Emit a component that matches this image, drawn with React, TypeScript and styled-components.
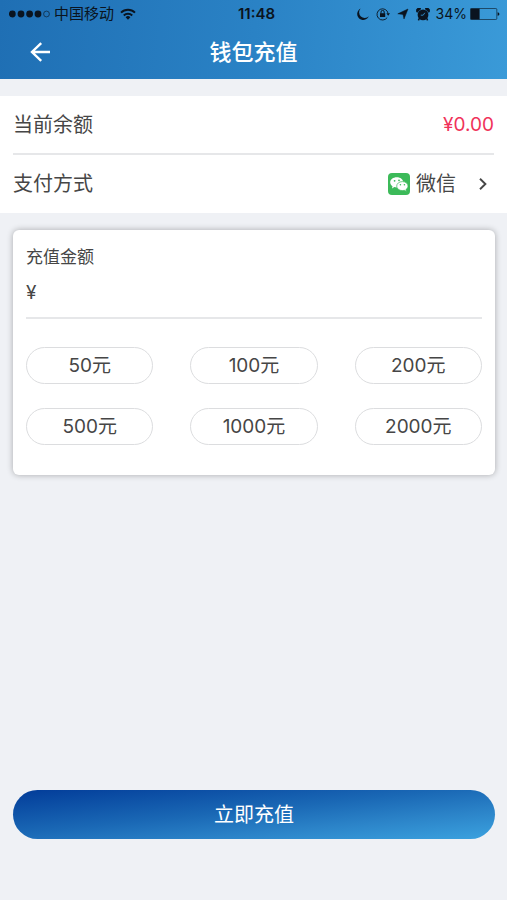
import React, { useState } from 'react';
import styled, { createGlobalStyle } from 'styled-components';

const GlobalStyle = createGlobalStyle`
  *, *::before, *::after { box-sizing: border-box; }
  body {
    margin: 0;
    background: #eff1f5;
    color: #464646;
    font-family: Inter, "Noto Sans CJK SC", sans-serif;
    font-size: 20px;
    line-height: 24px;
  }
  button, input { font: inherit; color: inherit; }
`;

const Page = styled.div`
  min-height: 100vh;
  display: flex;
  flex-direction: column;
`;

const TopBar = styled.header`
  background: linear-gradient(95deg, #1f6fb4 0%, #2a82c5 50%, #3a9ad8 100%);
`;

const StatusBar = styled.div`
  height: 28px;
  padding: 0 7px 0 9px;
  display: grid;
  grid-template-columns: 1fr auto 1fr;
  align-items: center;
  color: #0a1420;
  font-size: 15px;
  line-height: 20px;
`;

const StatusGroup = styled.div<{ $end?: boolean }>`
  display: flex;
  align-items: center;
  justify-content: ${(p) => (p.$end ? 'flex-end' : 'flex-start')};
  white-space: nowrap;
  svg { display: block; flex: none; }
`;

const Carrier = styled.span`
  margin: 0 6px 0 3px;
`;

const Clock = styled.time`
  font-weight: 600;
  padding-left: 4px;
`;

const StatusIcons = styled.div`
  display: flex;
  align-items: center;
  gap: 7px;
  margin-right: 6px;
`;

const Percent = styled.span`
  font-size: 14px;
  margin-right: 3px;
`;

const NavBar = styled.div`
  height: 51px;
  padding: 0 28px 3px;
  display: grid;
  grid-template-columns: 24px 1fr 24px;
  align-items: center;
`;

const BackButton = styled.button`
  padding: 0;
  border: 0;
  background: none;
  color: #fff;
  cursor: pointer;
  svg { display: block; }
`;

const Title = styled.h1`
  margin: 0;
  color: #fff;
  font-size: 22px;
  line-height: 28px;
  font-weight: 500;
  text-align: center;
`;

const Summary = styled.section`
  margin-top: 17px;
  padding: 0 13px;
  background: #fff;
`;

const SummaryRow = styled.div`
  height: 59px;
  display: flex;
  align-items: center;
  justify-content: space-between;
  border-bottom: 2px solid #e6e7e9;
`;

const MethodRow = styled.button`
  width: 100%;
  height: 58px;
  padding: 0;
  border: 0;
  background: none;
  display: flex;
  align-items: center;
  justify-content: space-between;
  cursor: pointer;
`;

const Balance = styled.span`
  color: #f0325a;
  font-size: 19px;
`;

const Method = styled.span`
  display: flex;
  align-items: center;
  padding-right: 7px;
  svg { display: block; }
`;

const MethodName = styled.span`
  margin: 0 23px 0 6px;
`;

const Card = styled.section`
  margin: 17px 12px 0 13px;
  padding: 15px 13px 30px;
  border-radius: 6px;
  background: #fff;
  box-shadow: 0 0 6px rgba(0, 0, 0, 0.3);
`;

const AmountLabel = styled.label`
  display: block;
  font-size: 17px;
`;

const AmountField = styled.div`
  height: 50px;
  display: flex;
  align-items: center;
  gap: 8px;
  border-bottom: 2px solid #e6e7e9;
  font-size: 19px;
`;

const AmountInput = styled.input`
  flex: 1;
  min-width: 0;
  padding: 0;
  border: 0;
  outline: 0;
  background: none;
`;

const Presets = styled.div`
  margin-top: 28px;
  display: grid;
  grid-template-columns: repeat(3, 1fr);
  gap: 24px 37px;
`;

const Preset = styled.button`
  height: 37px;
  padding: 0;
  border: 1px solid #dcdddf;
  border-radius: 19px;
  background: #fff;
  font-size: 19px;
  cursor: pointer;
`;

const Footer = styled.footer`
  margin-top: auto;
  padding: 24px 12px 61px 13px;
`;

const Submit = styled.button`
  width: 100%;
  height: 49px;
  padding: 0;
  border: 0;
  border-radius: 25px;
  color: #fff;
  background: linear-gradient(to bottom right, #023c99 0%, #1a68b5 45%, #2b83c8 70%, #3ba2df 100%);
  cursor: pointer;
`;

const presets = [50, 100, 200, 500, 1000, 2000];

const SignalIcon = () => (
  <svg width="42" height="10" viewBox="0 0 42 10" fill="currentColor">
    <circle cx="3.3" cy="5" r="3.4" />
    <circle cx="12" cy="5" r="3.4" />
    <circle cx="20.6" cy="5" r="3.4" />
    <circle cx="29" cy="5" r="3.4" />
    <circle cx="37.5" cy="5" r="2.9" fill="none" stroke="currentColor" strokeWidth="0.6" />
  </svg>
);

const WifiIcon = () => (
  <svg width="16" height="12" viewBox="0 0 16 12" fill="none" stroke="currentColor" strokeWidth="2">
    <path d="M1 4.6a10 10 0 0 1 14 0" />
    <path d="M3.8 7.5a6 6 0 0 1 8.4 0" />
    <path d="M8 11.8 5.6 9.3a3.4 3.4 0 0 1 4.8 0z" fill="currentColor" stroke="none" />
  </svg>
);

const MoonIcon = () => (
  <svg width="12" height="12" viewBox="0 0 12 12" fill="currentColor">
    <path d="M3.6.6A6 6 0 1 0 11.8 8.2 4.9 4.9 0 0 1 3.6.6z" />
  </svg>
);

const RotationLockIcon = () => (
  <svg width="14" height="14" viewBox="0 0 14 14" fill="none" stroke="currentColor">
    <path d="M11.2 10.6A5.6 5.6 0 1 1 12.1 6.4" strokeWidth="0.9" />
    <path d="M10.4 6.2h3.6l-1.8 2.6z" fill="currentColor" stroke="none" />
    <rect x="4" y="6.2" width="5.2" height="3.8" fill="currentColor" stroke="none" />
    <path d="M5 6.4V5a1.6 1.6 0 0 1 3.2 0v1.4" strokeWidth="1" />
  </svg>
);

const LocationIcon = () => (
  <svg width="12" height="12" viewBox="0 0 12 12" fill="currentColor">
    <path d="M11 1 7 11 6 6.4.8 5.8z" stroke="currentColor" strokeWidth="0.5" />
  </svg>
);

const AlarmIcon = () => (
  <svg width="14" height="13" viewBox="0 0 14 13" fill="currentColor">
    <circle cx="7" cy="6.9" r="5.4" />
    <path d="M1 4.4A2.6 2.6 0 0 1 5 .8zM13 4.4A2.6 2.6 0 0 0 9 .8z" stroke="currentColor" strokeWidth="0.6" />
    <path d="M3.5 10 2.4 12.4M10.5 10l1.1 2.4" stroke="currentColor" strokeWidth="1.5" />
    <path d="M4.8 7.2H7.2L8.8 4.8" fill="none" stroke="#3190cf" strokeWidth="0.9" />
  </svg>
);

const BatteryIcon = () => (
  <svg width="30" height="12" viewBox="0 0 30 12" fill="currentColor">
    <rect x="0.4" y="0.5" width="26.4" height="11" rx="1" fill="none" stroke="currentColor" strokeWidth="0.6" />
    <rect x="0.6" y="0.6" width="9" height="10.8" />
    <path d="M27.6 4.2c2.4.4 2.4 3.2 0 3.6z" />
  </svg>
);

const BackIcon = () => (
  <svg width="24" height="22" viewBox="0 0 24 22" fill="none" stroke="currentColor" strokeWidth="2.4">
    <path d="M22 11H4M13.2 2.2 4 11l9.2 8.8" />
  </svg>
);

const WechatIcon = () => (
  <svg width="22" height="22" viewBox="0 0 22 22">
    <rect width="22" height="22" rx="4" fill="#3cba59" />
    <path d="M8.8 4.2C5 4.2 2.2 6.4 2.2 9.3c0 1.7.9 3.1 2.3 4l-.5 2.1 2.3-1.3c.8.2 1.6.3 2.5.3 3.7 0 6.4-2.2 6.4-5.1S12.500 4.200 8.800 4.200z" fill="#fff" />
    <path d="M14.400 8.600c-3.300 0-5.700 2-5.700 4.500s2.400 4.500 5.700 4.500c.7 0 1.300-.1 1.900-.3l2.100 1.200-.5-1.900c1.300-.8 2.100-2 2.100-3.500 0-2.500-2.400-4.500-5.600-4.500z" fill="#fff" stroke="#3cba59" strokeWidth="0.7" />
    <g fill="#3cba59">
      <circle cx="6.600" cy="7.800" r="0.900" />
      <circle cx="11" cy="7.300" r="0.900" />
      <circle cx="12.400" cy="11.800" r="0.800" />
      <circle cx="16.400" cy="11.800" r="0.800" />
    </g>
  </svg>
);

const ChevronIcon = () => (
  <svg width="8" height="12" viewBox="0 0 8 12" fill="none" stroke="currentColor" strokeWidth="1.9">
    <path d="M1 .8 6.4 6 1 11.2" />
  </svg>
);

export default function App() {
  const [amount, setAmount] = useState('');

  return (
    <Page>
      <GlobalStyle />
      <TopBar>
        <StatusBar>
          <StatusGroup>
            <SignalIcon />
            <Carrier>中国移动</Carrier>
            <WifiIcon />
          </StatusGroup>
          <Clock>11:48</Clock>
          <StatusGroup $end>
            <StatusIcons>
              <MoonIcon />
              <RotationLockIcon />
              <LocationIcon />
              <AlarmIcon />
            </StatusIcons>
            <Percent>34%</Percent>
            <BatteryIcon />
          </StatusGroup>
        </StatusBar>
        <NavBar>
          <BackButton type="button" aria-label="返回">
            <BackIcon />
          </BackButton>
          <Title>钱包充值</Title>
        </NavBar>
      </TopBar>

      <Summary>
        <SummaryRow>
          <span>当前余额</span>
          <Balance>¥0.00</Balance>
        </SummaryRow>
        <MethodRow type="button">
          <span>支付方式</span>
          <Method>
            <WechatIcon />
            <MethodName>微信</MethodName>
            <ChevronIcon />
          </Method>
        </MethodRow>
      </Summary>

      <Card>
        <AmountLabel htmlFor="amount">充值金额</AmountLabel>
        <AmountField>
          <span>¥</span>
          <AmountInput
            id="amount"
            inputMode="decimal"
            value={amount}
            onChange={(e) => setAmount(e.target.value)}
          />
        </AmountField>
        <Presets>
          {presets.map((value) => (
            <Preset key={value} type="button" onClick={() => setAmount(String(value))}>
              {value}元
            </Preset>
          ))}
        </Presets>
      </Card>

      <Footer>
        <Submit type="button">立即充值</Submit>
      </Footer>
    </Page>
  );
}
